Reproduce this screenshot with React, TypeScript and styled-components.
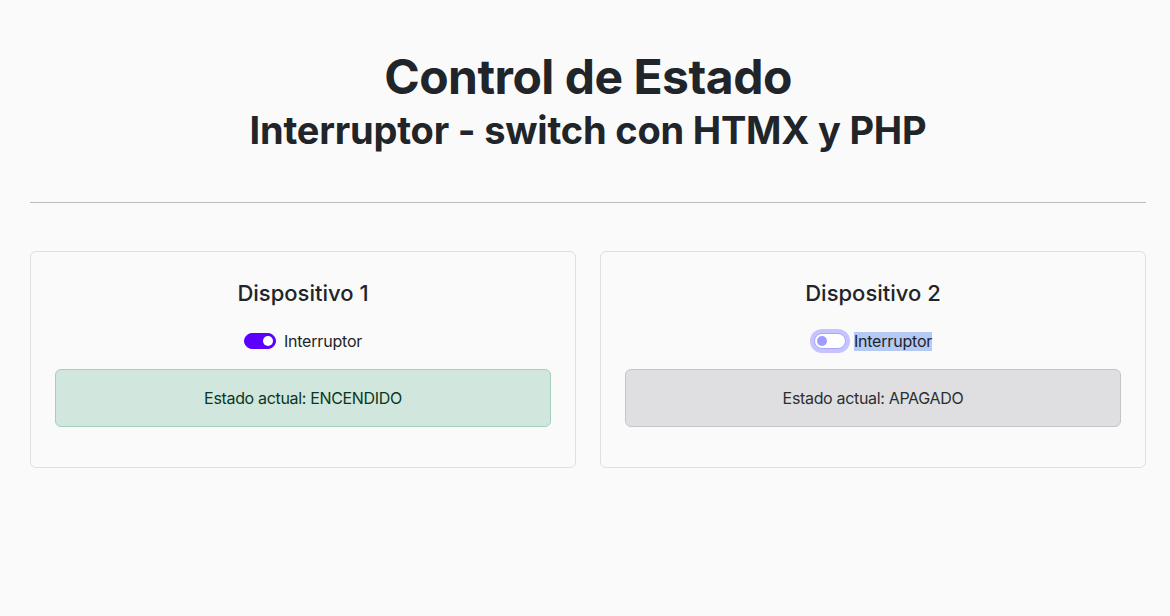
import React from "react";
import styled, { createGlobalStyle } from "styled-components";

const Global = createGlobalStyle`
  html, body { margin: 0; padding: 0; }
  body {
    background: #fafafa;
    color: #212529;
    font-family: Inter, "Noto Sans", "Liberation Sans", sans-serif;
    font-size: 16px;
    line-height: 1.5;
  }
`;

const Page = styled.main`
  padding: 0 24px 0 30px;
`;

const Header = styled.header`
  text-align: center;
  padding-top: 48px;
`;

const Title = styled.h1`
  margin: 0 0 2px;
  font-size: 48px;
  font-weight: 700;
  line-height: 1.2;
  letter-spacing: -0.5px;
`;

const Subtitle = styled.h2`
  margin: 0;
  font-size: 38px;
  font-weight: 700;
  line-height: 1.2;
  letter-spacing: -0.2px;
`;

const Rule = styled.hr`
  margin: 49px 0 48px;
  border: 0;
  border-top: 1px solid #bdbdbd;
`;

const Grid = styled.section`
  display: grid;
  grid-template-columns: 1fr 1fr;
  gap: 24px;
`;

const Card = styled.div`
  border: 1px solid #dfdfe1;
  border-radius: 6px;
  background: #fafafa;
  padding: 24px 24px 40px;
  text-align: center;
`;

const CardTitle = styled.h4`
  margin: 0 0 19px;
  font-size: 22px;
  font-weight: 500;
  line-height: 34px;
`;

const SwitchRow = styled.div`
  display: flex;
  justify-content: center;
  align-items: center;
  gap: 8px;
  height: 24px;
  margin-bottom: 16px;
`;

const Track = styled.span<{ $on: boolean; $focus?: boolean }>`
  position: relative;
  display: inline-block;
  width: 32px;
  height: 16px;
  box-sizing: border-box;
  border-radius: 8px;
  background: ${(p) => (p.$on ? "#5b00ff" : "#ffffff")};
  border: 1px solid ${(p) => (p.$on ? "#5b00ff" : "#a9a6ff")};
  box-shadow: ${(p) => (p.$focus ? "0 0 0 4px #c6c4fe" : "none")};
  &::after {
    content: "";
    position: absolute;
    top: 2px;
    ${(p) => (p.$on ? "right: 2px;" : "left: 2px;")}
    width: 10px;
    height: 10px;
    border-radius: 50%;
    background: ${(p) => (p.$on ? "#ffffff" : "#a09cff")};
  }
`;

const Label = styled.span<{ $selected?: boolean }>`
  font-size: 16px;
  line-height: 19px;
  letter-spacing: -0.2px;
  background: ${(p) => (p.$selected ? "#b5c9f5" : "transparent")};
`;

const Alert = styled.div<{ $tone: "success" | "secondary" }>`
  border-radius: 6px;
  padding: 16px;
  font-size: 16px;
  line-height: 24px;
  letter-spacing: -0.33px;
  border: 1px solid ${(p) => (p.$tone === "success" ? "#a3cfbb" : "#c4c5c8")};
  background: ${(p) => (p.$tone === "success" ? "#d1e7dd" : "#dfdfe1")};
  color: ${(p) => (p.$tone === "success" ? "#0a3622" : "#2b2f32")};
`;

const devices = [
  { name: "Dispositivo 1", on: true },
  { name: "Dispositivo 2", on: false },
];

export default function App() {
  return (
    <>
      <Global />
      <Page>
        <Header>
          <Title>Control de Estado</Title>
          <Subtitle>Interruptor - switch con HTMX y PHP</Subtitle>
        </Header>
        <Rule />
        <Grid>
          {devices.map((d) => (
            <Card key={d.name}>
              <CardTitle>{d.name}</CardTitle>
              <SwitchRow>
                <Track $on={d.on} $focus={!d.on} />
                <Label $selected={!d.on}>Interruptor</Label>
              </SwitchRow>
              <Alert $tone={d.on ? "success" : "secondary"}>
                Estado actual: {d.on ? "ENCENDIDO" : "APAGADO"}
              </Alert>
            </Card>
          ))}
        </Grid>
      </Page>
    </>
  );
}
